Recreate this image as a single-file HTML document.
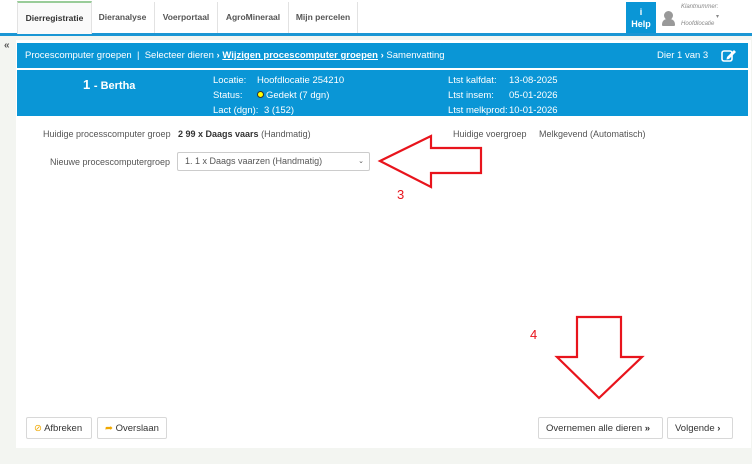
<!DOCTYPE html>
<html><head><style>
body{margin:0;width:752px;height:464px;background:#f3f5f1;font-family:"Liberation Sans",Arial,sans-serif;position:relative;overflow:hidden;font-size:9px;color:#333}
.a{position:absolute}
.top{left:0;top:0;width:752px;height:33px;background:#fff;border-bottom:3px solid #1a96d4}
.tab{position:absolute;top:2px;height:31px;line-height:31px;font-size:8.5px;color:#555;font-weight:bold;text-align:center;border-right:1px solid #e2e2e2}
.blue{background:#0a96d6;color:#fff}
.btn{position:absolute;top:417px;height:22px;border:1px solid #d8d8d8;border-radius:2px;background:#fff;line-height:22px;font-size:9.5px;color:#333;box-sizing:border-box;padding:0 7px}
</style></head><body>
<div class="a top"></div>
<div class="tab" style="left:17px;width:73px;border-left:1px solid #e2e2e2;border-top:2px solid #9c9;top:1px;color:#333;background:#fafafa">Dierregistratie</div>
<div class="tab" style="left:91px;width:63px">Dieranalyse</div>
<div class="tab" style="left:155px;width:62px">Voerportaal</div>
<div class="tab" style="left:218px;width:70px">AgroMineraal</div>
<div class="tab" style="left:289px;width:68px">Mijn percelen</div>
<div class="a blue" style="left:626px;top:2px;width:30px;height:31px;text-align:center;font-weight:bold;font-size:9px;line-height:12px;padding-top:4px;box-sizing:border-box">i<br>Help</div>
<div class="a" style="left:664px;top:11px;width:9px;height:9px;border-radius:50%;background:#999"></div>
<div class="a" style="left:662px;top:19px;width:13px;height:7px;border-radius:5px 5px 1px 1px;background:#999"></div>
<div class="a" style="left:681px;top:4px;font-size:6px;font-style:italic;color:#888">Klantnummer:</div>
<div class="a" style="left:716px;top:13px;font-size:6px;color:#888">▾</div>
<div class="a" style="left:681px;top:21px;font-size:6px;font-style:italic;color:#888">Hoofdlocatie</div>
<div class="a" style="left:4px;top:40px;font-size:10px;color:#555;font-weight:bold">«</div>
<div class="a" style="left:16px;top:40px;width:735px;height:408px;background:#fff"></div>
<div class="a blue" style="left:17px;top:43px;width:731px;height:25px;font-size:9.5px;line-height:25px">
<span style="position:absolute;left:8px;white-space:nowrap">Procescomputer groepen &nbsp;| &nbsp;Selecteer dieren <b>›</b> <b style="text-decoration:underline">Wijzigen procescomputer groepen</b> <b>›</b> Samenvatting</span>
<span style="position:absolute;left:640px">Dier 1 van 3</span>
<svg style="position:absolute;left:704px;top:5px" width="16" height="14"><rect x="1" y="3" width="10" height="10" rx="2" fill="none" stroke="#fff" stroke-width="1.6"/><path d="M6 9 L13 2 L15 4 L8 11 L5.5 11.5 Z" fill="#fff"/></svg>
</div>
<div class="a blue" style="left:17px;top:70px;width:731px;height:46px;font-size:9.5px">
<div class="a" style="left:66px;top:7px;font-size:13px;font-weight:bold">1 <span style="font-size:11px">- Bertha</span></div>
<div class="a" style="left:196px;top:3px;line-height:15px">Locatie:<br>Status:<br>Lact (dgn):</div>
<div class="a" style="left:240px;top:3px;line-height:15px">Hoofdlocatie 254210<br><span style="display:inline-block;width:5px;height:5px;border-radius:50%;background:#ff0;border:1px solid #333;margin-right:2px"></span>Gedekt (7 dgn)</div>
<div class="a" style="left:247px;top:33px;line-height:15px">3 (152)</div>
<div class="a" style="left:431px;top:3px;line-height:15px">Ltst kalfdat:<br>Ltst insem:<br>Ltst melkprod:</div>
<div class="a" style="left:492px;top:3px;line-height:15px">13-08-2025<br>05-01-2026<br>10-01-2026</div>
</div>
<div class="a" style="left:43px;top:129px;color:#555">Huidige processcomputer groep</div>
<div class="a" style="left:178px;top:129px"><b>2 99 x Daags vaars</b> <span style="color:#555">(Handmatig)</span></div>
<div class="a" style="left:453px;top:129px;color:#555">Huidige voergroep</div>
<div class="a" style="left:539px;top:129px;color:#555">Melkgevend (Automatisch)</div>
<div class="a" style="left:50px;top:157px;color:#555">Nieuwe procescomputergroep</div>
<div class="a" style="left:177px;top:152px;width:193px;height:19px;border:1px solid #ccc;border-radius:2px;box-sizing:border-box;line-height:17px;padding-left:7px;color:#555">1. 1 x Daags vaarzen (Handmatig)<span style="position:absolute;right:5px;font-size:7px">⌄</span></div>
<svg class="a" style="left:0;top:0" width="752" height="464">
<polygon points="380,161 431,136 431,148 481,148 481,173 431,173 431,187" fill="none" stroke="#e8141c" stroke-width="2.2"/>
<polygon points="577,317 621,317 621,357 642,357 599,398 557,357 577,357" fill="none" stroke="#e8141c" stroke-width="2.2"/>
<text x="397" y="199" fill="#e8141c" font-size="13" font-family="Liberation Sans">3</text>
<text x="530" y="339" fill="#e8141c" font-size="13" font-family="Liberation Sans">4</text>
</svg>
<div class="btn" style="left:26px;width:66px"><span style="color:#f0a800">⊘</span> Afbreken</div>
<div class="btn" style="left:97px;width:70px"><span style="color:#f0a800">➦</span> Overslaan</div>
<div class="btn" style="left:538px;width:125px">Overnemen alle dieren <b>»</b></div>
<div class="btn" style="left:667px;width:66px">Volgende <b>›</b></div>
</body></html>
